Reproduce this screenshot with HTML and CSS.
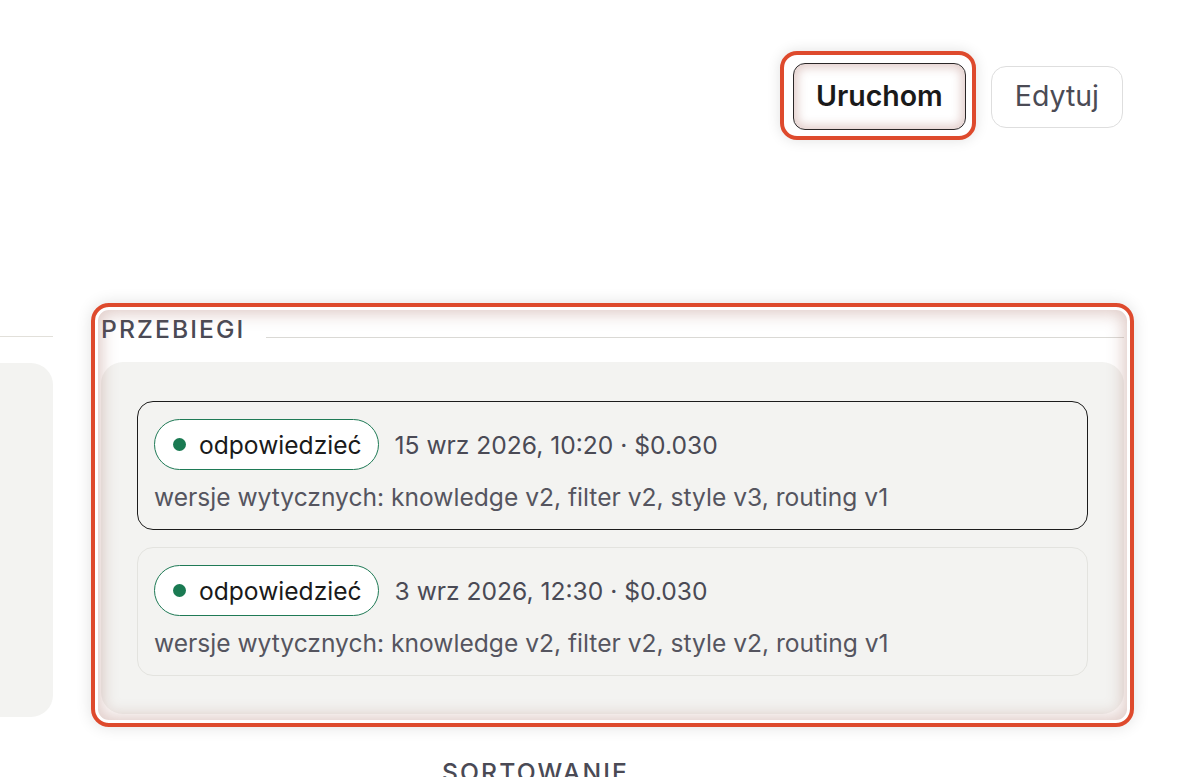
FILE: index.html
```html
<!DOCTYPE html>
<html lang="pl">
<head>
<meta charset="utf-8">
<title>Przebiegi</title>
<link rel="stylesheet" href="styles.css">
</head>
<body>
<div class="topbar">
  <div class="btn-wrap">
    <button class="btn btn-primary">Uruchom</button>
    <span class="hl hl-btn"></span>
  </div>
  <button class="btn btn-secondary">Edytuj</button>
</div>

<div class="main">
  <div class="col-left">
    <div class="sec-head"><span class="sec-line"></span></div>
    <div class="panel panel-left"></div>
  </div>

  <section class="section">
    <div class="sec-head">
      <span class="sec-title">PRZEBIEGI</span>
      <span class="sec-line"></span>
    </div>
    <div class="panel">
      <div class="card card-active">
        <div class="card-row">
          <span class="badge"><span class="dot"></span>odpowiedzieć</span>
          <span class="meta">15 wrz 2026, 10:20 · $0.030</span>
        </div>
        <div class="versions">wersje wytycznych: knowledge v2, filter v2, style v3, routing v1</div>
      </div>
      <div class="card">
        <div class="card-row">
          <span class="badge"><span class="dot"></span>odpowiedzieć</span>
          <span class="meta">3 wrz 2026, 12:30 · $0.030</span>
        </div>
        <div class="versions">wersje wytycznych: knowledge v2, filter v2, style v2, routing v1</div>
      </div>
    </div>
    <span class="hl hl-section"></span>
  </section>
</div>

<div class="next-head">SORTOWANIE</div>
</body>
</html>
```

FILE: styles.css
```css
* { box-sizing: border-box; }

html, body {
  margin: 0;
  padding: 0;
  background: #ffffff;
  font-family: Inter, "Noto Sans", "Liberation Sans", sans-serif;
  color: #1a1a1a;
  overflow: hidden;
}

.topbar {
  display: flex;
  justify-content: flex-end;
  align-items: center;
  gap: 25px;
  padding: 63px 77px 0 0;
}

.btn-wrap {
  position: relative;
  display: flex;
}

.btn {
  font-family: inherit;
  font-size: 28.5px;
  background: #ffffff;
  cursor: pointer;
  line-height: 1;
}

.btn-primary {
  height: 67px;
  padding: 0 22px;
  border: 1.5px solid #2a2626;
  border-radius: 12px;
  font-weight: 600;
  color: #1a1a1a;
  box-shadow: inset 0 0 10px 4px rgba(170, 110, 100, 0.32);
}

.btn-secondary {
  height: 62px;
  padding: 0 23px;
  border: 1.5px solid #dedede;
  border-radius: 15px;
  font-weight: 400;
  color: #4b4b55;
}

.hl {
  position: absolute;
  border: 4px solid #de4a2d;
  pointer-events: none;
}

.hl-btn {
  top: -12px;
  bottom: -10px;
  left: -13px;
  right: -10px;
  border-radius: 17px;
  box-shadow: 0 0 14px rgba(0, 0, 0, 0.12);
}

.main {
  display: grid;
  grid-template-columns: 53px 1023px;
  column-gap: 48px;
  margin-top: 184px;
}

.sec-head {
  display: flex;
  align-items: flex-end;
  height: 30px;
}

.col-left .sec-head {
  padding-bottom: 7px;
}

.sec-title {
  font-size: 24.7px;
  letter-spacing: 2.1px;
  font-weight: 500;
  color: #4a4a55;
  line-height: 30px;
  align-self: flex-start;
}

.sec-line {
  flex: 1;
  height: 1px;
  background: #dad9d5;
  margin-left: 21px;
  margin-bottom: 6px;
}

.col-left .sec-line {
  margin: 0;
  background: #e2e0da;
}

.panel {
  margin-top: 18px;
  background: #f3f3f1;
  border-radius: 22px;
  padding: 39px 36px 38px;
  display: flex;
  flex-direction: column;
  gap: 17px;
}

.panel-left {
  height: 354px;
  padding: 0;
  margin-top: 19px;
  border-radius: 0 22px 22px 0;
}

.section {
  position: relative;
}

.hl-section {
  top: -11px;
  bottom: -10px;
  left: -10px;
  right: -10px;
  border-radius: 18px;
  box-shadow: 0 0 16px rgba(0, 0, 0, 0.12),
              inset 0 0 0 3px #ffffff,
              inset 0 0 16px 7px rgba(160, 95, 85, 0.32);
}

.card {
  border: 1.5px solid #e3e3df;
  border-radius: 16px;
  padding: 17px 16px 17px;
  background: #f3f3f1;
}

.card-active {
  border-color: #1c1c1c;
}

.card-row {
  display: flex;
  align-items: center;
  gap: 16px;
}

.badge {
  display: inline-flex;
  align-items: center;
  gap: 13px;
  height: 51px;
  padding: 0 16px 0 18px;
  border: 1.5px solid #1f7a56;
  border-radius: 26px;
  background: #ffffff;
  font-size: 24.6px;
  color: #1a1a1a;
}

.dot {
  width: 13px;
  height: 13px;
  border-radius: 50%;
  background: #1a7a52;
}

.meta {
  font-size: 24.6px;
  color: #4a4a55;
}

.versions {
  margin-top: 12px;
  font-size: 24.6px;
  line-height: 30px;
  color: #55555f;
}

.next-head {
  margin-top: 40px;
  padding-left: 442px;
  font-size: 24.7px;
  letter-spacing: 2.1px;
  font-weight: 500;
  color: #4a4a55;
}
```
